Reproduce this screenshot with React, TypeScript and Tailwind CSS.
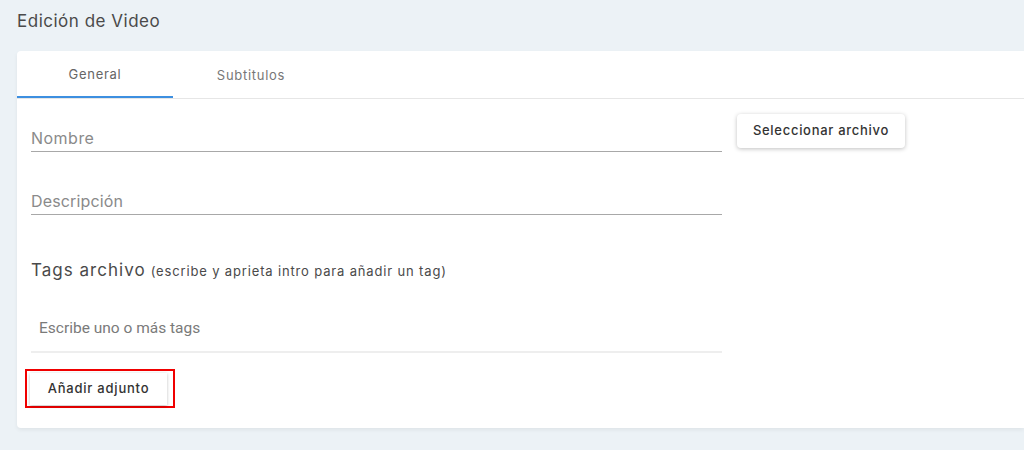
export default function App() {
  return (
    <div
      className="h-[450px] w-[1024px] overflow-hidden bg-[#ecf2f6]"
      style={{ fontFamily: 'Inter, "Open Sans", sans-serif' }}
    >
      <div className="flex h-[51px] items-start pl-[17px] pt-[11px]">
        <h1 className="text-[17px] leading-[20px] tracking-[0.03em] text-[#4a4a4a]">Edición de Video</h1>
      </div>

      <div className="ml-[17px] h-[377px] rounded-tl-[4px] rounded-bl-[4px] bg-white shadow-[0_2px_4px_rgba(0,0,0,0.06)]">
        {/* Tabs */}
        <div className="flex h-[48px] border-b border-[#e6e6e6]">
          <div className="flex w-[156px] items-center justify-center border-b-2 border-[#3d8fe0] pt-[2px] text-[13px] tracking-[0.055em] text-[#666]">
            General
          </div>
          <div className="flex w-[156px] items-center justify-center pt-[2px] text-[13px] tracking-[0.055em] text-[#777]">
            Subtitulos
          </div>
        </div>

        <div className="flex gap-[15px] pl-[14px] pt-[15px]">
          {/* Left column */}
          <div className="flex w-[691px] flex-col">
            <div className="flex h-[38px] items-end border-b border-[#a8a8a8] pb-[4px] text-[16px] leading-[18px] tracking-[0.03em] text-[#8a8a8a]">
              Nombre
            </div>
            <div className="mt-[25px] flex h-[38px] items-end border-b border-[#a8a8a8] pb-[4px] text-[16px] leading-[18px] tracking-[0.01em] text-[#8a8a8a]">
              Descripción
            </div>

            <div className="mt-[43px] flex items-baseline gap-[5px] text-[#4a4a4a]">
              <span className="text-[17px] tracking-[0.06em]">Tags archivo</span>
              <span className="text-[13px] tracking-[0.065em]">(escribe y aprieta intro para añadir un tag)</span>
            </div>

            <div
              className="mt-[23px] flex h-[46px] items-center border-b-2 border-[#eeeeee] pl-[8px] text-[15.5px] text-[#7a7a7a]"
              style={{ fontFamily: 'Roboto, sans-serif' }}
            >
              Escribe uno o más tags
            </div>

            <div className="mt-[16px] -ml-[6px] w-[150px] border-2 border-[#f00000] pb-[1px] pl-[3px] pt-[2px]">
              <button className="flex h-[32px] w-[137px] items-center justify-center bg-white text-[13px] font-medium tracking-[0.06em] text-[#333] shadow-[0_1px_3px_rgba(0,0,0,0.25)]">
                Añadir adjunto
              </button>
            </div>
          </div>

          {/* Right column */}
          <div>
            <button className="flex h-[34px] w-[168px] items-center justify-center rounded-[4px] bg-white text-[13px] font-medium tracking-[0.055em] text-[#333] shadow-[0_1px_4px_rgba(0,0,0,0.25)]">
              Seleccionar archivo
            </button>
          </div>
        </div>
      </div>
    </div>
  );
}
